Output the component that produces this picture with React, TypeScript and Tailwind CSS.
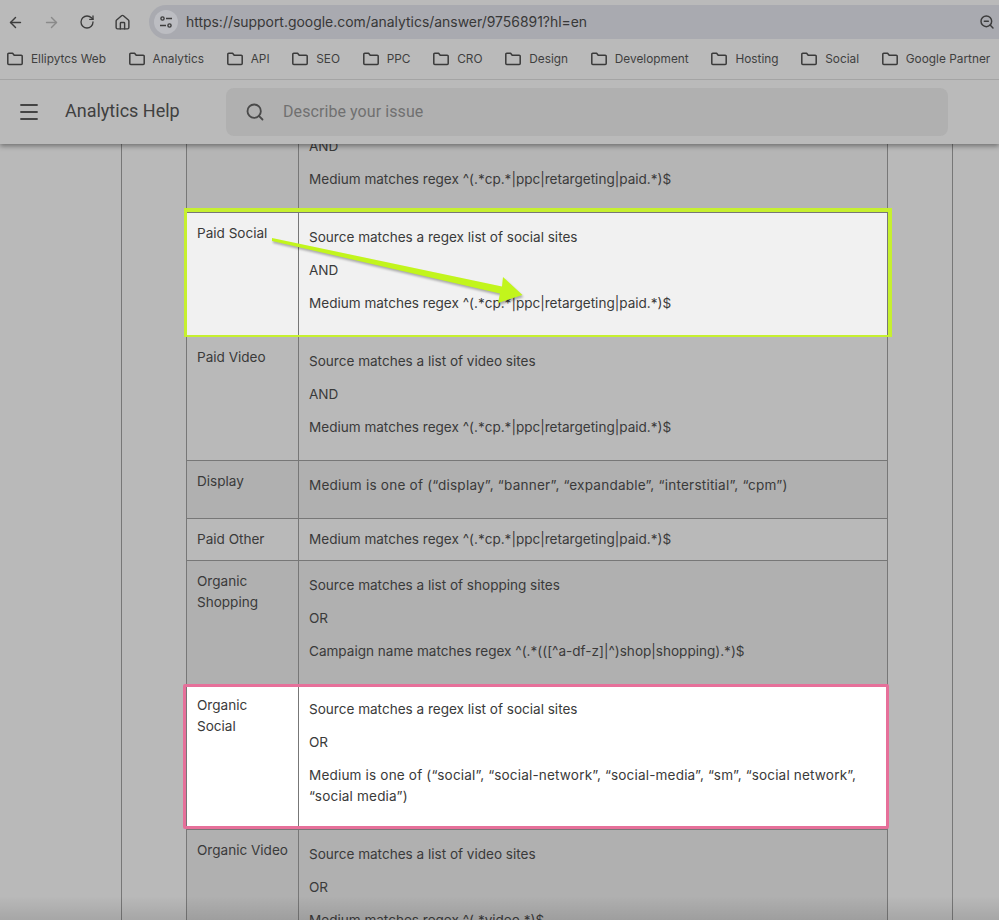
import { ArrowLeft, ArrowRight, RotateCw, House, Menu, Search, ZoomOut } from "lucide-react";
import type { ReactNode } from "react";

const bookmarks = ["Ellipytcs Web", "Analytics", "API", "SEO", "PPC", "CRO", "Design", "Development", "Hosting", "Social", "Google Partner"];

function FolderIcon() {
  return (
    <svg width="16" height="14" viewBox="0 0 16 14" fill="none" stroke="#3a3a3a" strokeWidth="1.5" strokeLinejoin="round">
      <path d="M0.8 11.5V2.2a1 1 0 0 1 1-1h3.8l1.6 2h7a1 1 0 0 1 1 1v7.3a1 1 0 0 1-1 1H1.8a1 1 0 0 1-1-1z" />
    </svg>
  );
}

function Row({ name, bg, children }: { name: ReactNode; bg: string; children: ReactNode }) {
  return (
    <div className={`grid grid-cols-[111px_1fr] border-t border-[#777777] ${bg}`}>
      <div className="pl-[10px] pr-2 pt-[10px] pb-[10px]">{name}</div>
      <div className="border-l border-[#777777] pl-[10px] pr-6 pt-[14px] pb-[10px] flex flex-col gap-3">{children}</div>
    </div>
  );
}

export default function App() {
  return (
    <div className="relative w-[999px] h-[920px] overflow-hidden bg-[#b9b9b9] text-[13.55px] leading-[21px] text-[#3a3a3a] font-['Inter','Liberation_Sans',sans-serif]">
      <div className="relative z-20 h-[144px] bg-[#bababa] shadow-[0_2px_5px_rgba(0,0,0,0.4)]">
        <div className="h-[39px] flex items-end pl-[7px] text-[#3c3c3c]">
          <div className="flex items-center h-[34px] gap-[19px] w-[142px]">
            <ArrowLeft size={17} strokeWidth={2} />
            <ArrowRight size={17} strokeWidth={2} className="text-[#8a8a8a]" />
            <RotateCw size={16} strokeWidth={2} />
            <House size={17} strokeWidth={2} />
          </div>
          <div className="flex-1 h-[34px] rounded-l-[17px] bg-[#a9aab0] flex items-center pl-[5px] pr-[4px] text-[13.93px]">
            <div className="w-[24px] h-[24px] rounded-full bg-[#bcbdc2] flex items-center justify-center">
              <svg width="14" height="14" viewBox="0 0 14 14" fill="none" stroke="#3c3c3c" strokeWidth="1.4">
                <circle cx="3.5" cy="3.5" r="1.6" />
                <path d="M7 3.5h6M1 10.5h6" />
                <circle cx="10.5" cy="10.5" r="1.6" />
              </svg>
            </div>
            <span className="ml-[8px] flex-1 text-[#383838]">https://support.google.com/analytics/answer/9756891?hl=en</span>
            <ZoomOut size={16} strokeWidth={2.2} className="text-[#3c3c3c]" />
          </div>
        </div>
        <div className="h-[41px] flex items-center pl-[7px] gap-[22.7px] border-b border-[#a4a4a4] text-[11.85px] text-[#3f3f3f] whitespace-nowrap">
          {bookmarks.map((b) => (
            <div key={b} className="flex items-center gap-2">
              <FolderIcon />
              <span>{b}</span>
            </div>
          ))}
        </div>
        <div className="h-[64px] pb-[1px] flex items-center">
          <Menu size={24} strokeWidth={1.8} className="ml-[17px] text-[#444444]" />
          <span className="ml-[24px] w-[161px] pb-[2px] text-[18px] text-[#404040] font-['Roboto',sans-serif]">Analytics Help</span>
          <div className="w-[722px] h-[48px] rounded-lg bg-[#b0b0b0] flex items-center pl-[19px]">
            <Search size={20} strokeWidth={2.2} className="text-[#4a4a4a]" />
            <span className="ml-[18px] text-[16px] tracking-[0.08px] text-[#707070] font-['Roboto',sans-serif]">Describe your issue</span>
          </div>
        </div>
      </div>

      <div className="ml-[121px] w-[832px] h-[776px] border-x border-[#777777] pl-[64px]">
        <div className="w-[702px] border-x border-[#777777]">
          <div className="grid grid-cols-[111px_1fr] grid-rows-[68px] bg-[#b5b5b5]">
            <div />
            <div className="border-l border-[#777777] pl-[10px] flex flex-col justify-end gap-3 pb-[22px] overflow-hidden">
              <p className="shrink-0">AND</p>
              <p className="shrink-0">Medium matches regex ^(.*cp.*|ppc|retargeting|paid.*)$</p>
            </div>
          </div>
          <Row name="Paid Social" bg="bg-[#f1f1f1]">
            <p>Source matches a regex list of social sites</p>
            <p>AND</p>
            <p>Medium matches regex ^(.*cp.*|ppc|retargeting|paid.*)$</p>
            <p className="h-0" />
          </Row>
          <Row name="Paid Video" bg="bg-[#b9b9b9]">
            <p>Source matches a list of video sites</p>
            <p>AND</p>
            <p>Medium matches regex ^(.*cp.*|ppc|retargeting|paid.*)$</p>
            <p className="h-0" />
          </Row>
          <Row name="Display" bg="bg-[#b0b0b0]">
            <p className="tracking-[0.22px]">Medium is one of (“display”, “banner”, “expandable”, “interstitial”, “cpm”)</p>
            <p className="h-0" />
          </Row>
          <div className="grid grid-cols-[111px_1fr] border-t border-[#777777] bg-[#b9b9b9] h-[42px]">
            <div className="pl-[10px] pt-[10px]">Paid Other</div>
            <div className="border-l border-[#777777] pl-[10px] pt-[10px]">Medium matches regex ^(.*cp.*|ppc|retargeting|paid.*)$</div>
          </div>
          <Row name={<>Organic<br />Shopping</>} bg="bg-[#b0b0b0]">
            <p>Source matches a list of shopping sites</p>
            <p>OR</p>
            <p>Campaign name matches regex ^(.*(([^a-df-z]|^)shop|shopping).*)$</p>
            <p className="h-0" />
          </Row>
          <Row name={<>Organic<br />Social</>} bg="bg-white">
            <p>Source matches a regex list of social sites</p>
            <p>OR</p>
            <p className="tracking-[0.17px] whitespace-nowrap">Medium is one of (“social”, “social-network”, “social-media”, “sm”, “social network”,<br />“social media”)</p>
            <p className="h-0" />
          </Row>
          <Row name="Organic Video" bg="bg-[#b0b0b0]">
            <p>Source matches a list of video sites</p>
            <p>OR</p>
            <p>Medium matches regex ^(.*video.*)$</p>
            <p className="h-0" />
          </Row>
        </div>
      </div>

      <div className="absolute left-[184px] top-[208px] w-[708px] h-[129px] border-t-4 border-l-[3px] border-r-4 border-b-2 border-[#c6f02f] z-10" />
      <div className="absolute left-[183px] top-[684px] w-[706px] h-[145px] border-[3px] border-[#e6709a] rounded-[2px] z-10" />
      <svg className="absolute left-0 top-0 z-10 drop-shadow-[1px_2px_1px_rgba(0,0,0,0.3)]" width="999" height="920">
        <polygon points="272,238 502,286.5 503,277 522.5,295 498,303 500,293.5 272,241" fill="#c2f51c" />
      </svg>
      <div className="absolute left-0 right-0 bottom-0 h-[24px] bg-gradient-to-b from-transparent to-[rgba(0,0,0,0.1)] z-10" />
    </div>
  );
}
